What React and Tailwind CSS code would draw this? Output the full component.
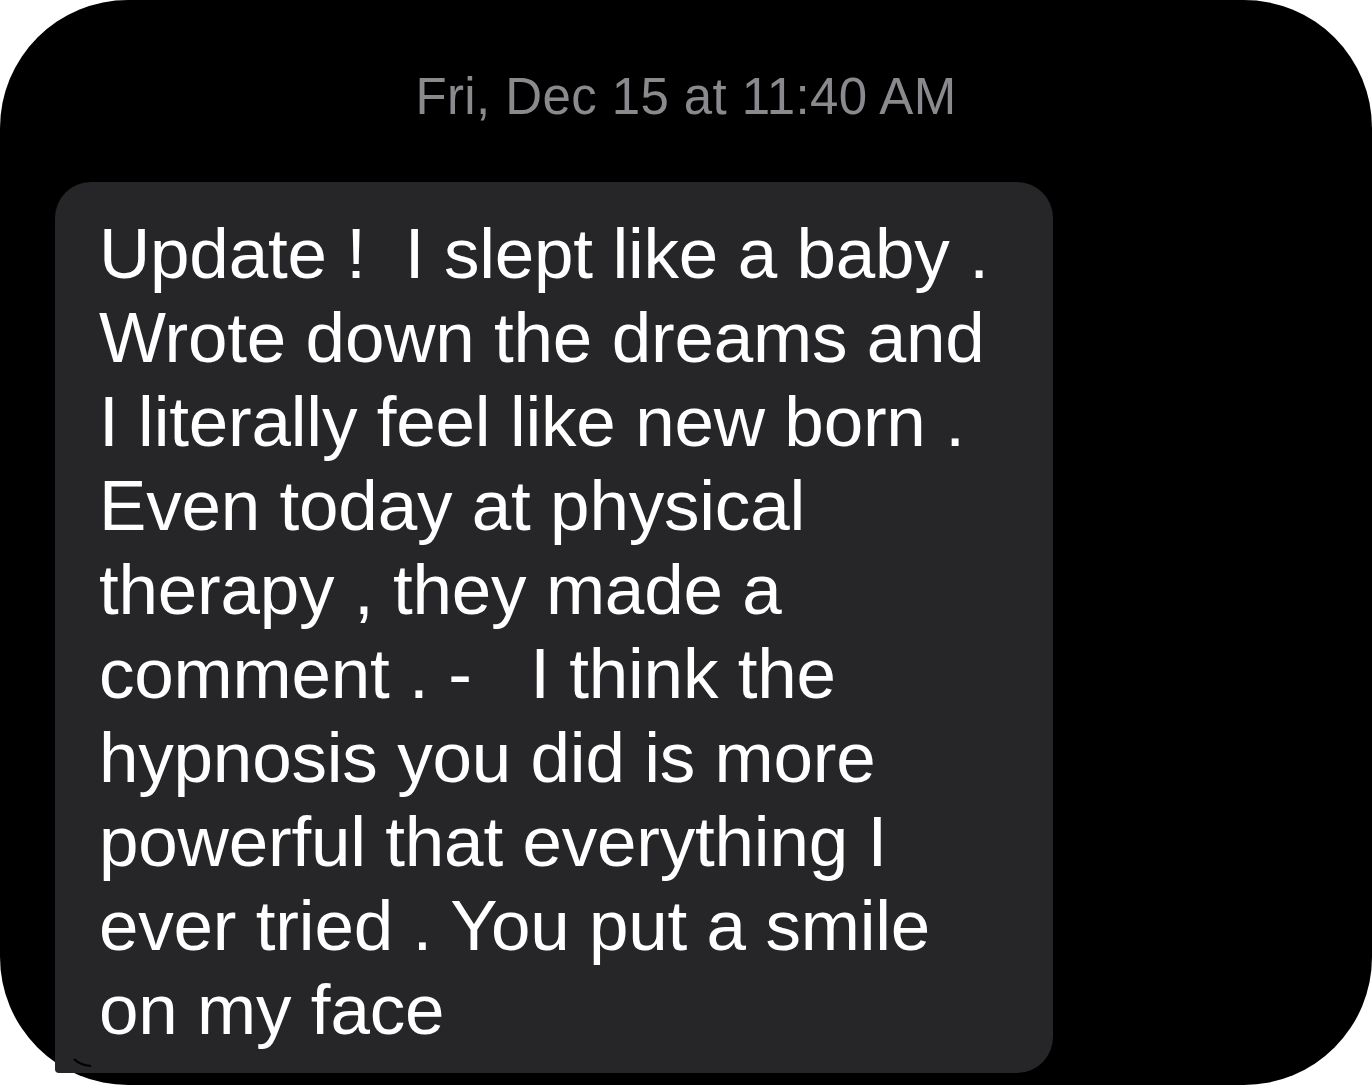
export default function App() {
  const lines = [
    'Update !  I slept like a baby .',
    'Wrote down the dreams and',
    'I literally feel like new born .',
    'Even today at physical',
    'therapy , they made a',
    'comment . -   I think the',
    'hypnosis you did is more',
    'powerful that everything I',
    'ever tried . You put a smile',
    'on my face',
  ];

  return (
    <div className="w-[1372px] h-[1089px] bg-white font-['Liberation_Sans',Arial,sans-serif]">
      <div className="h-[1085px] bg-black rounded-[128px] pt-[67px] pl-[55px]">
        <div className="w-[1262px] text-center text-[51px] leading-[60px] tracking-[0.4px] text-[#8a8a8e]">
          Fri, Dec 15 at 11:40 AM
        </div>

        <div className="relative mt-[55px] w-[998px] h-[891px] bg-[#262628] rounded-[36px] rounded-bl-[4px] pt-[30px] pl-[44px]">
          {lines.map((line, i) => (
            <div key={i} className="text-[71px] leading-[84px] text-white whitespace-pre tracking-[-0.2px]">
              {line}
            </div>
          ))}
          <svg className="absolute left-[16px] bottom-[4px]" width="22" height="14" viewBox="0 0 22 14">
            <path d="M3 4 Q9 10 20 11" stroke="#000" strokeWidth="2" fill="none" />
          </svg>
        </div>
      </div>
    </div>
  );
}
